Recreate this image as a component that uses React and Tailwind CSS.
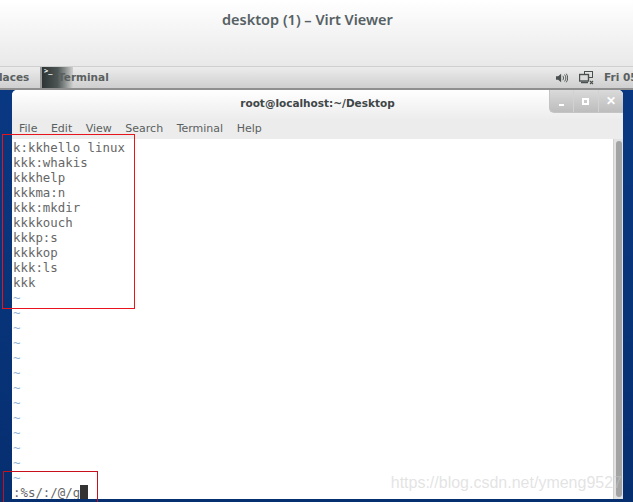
const LINES = ['k:kkhello linux', 'kkk:whakis', 'kkkhelp', 'kkkma:n', 'kkk:mkdir', 'kkkkouch', 'kkkp:s', 'kkkkop', 'kkk:ls', 'kkk'];
const MENU = ['File', 'Edit', 'View', 'Search', 'Terminal', 'Help'];
const TILDES = Array.from({ length: 13 });

function SoundIcon() {
  return (
    <svg width="12" height="12" viewBox="0 0 14 12" className="text-[#4a4f50]">
      <path d="M0 4h2.500L6 1v10L2.500 8H0z" fill="currentColor" />
      <path d="M8 3.500c1 1.500 1 3.500 0 5M10 2c2 2.500 2 5.500 0 8M12 1c2.200 3 2.200 7 0 10" fill="none" stroke="currentColor" strokeWidth="1.100" />
    </svg>
  );
}

function NetworkIcon() {
  return (
    <svg width="15" height="14" viewBox="0 0 15 14" className="text-[#4a4f50]" fill="none" stroke="currentColor">
      <rect x="5.500" y="0.500" width="8" height="6" strokeWidth="1" />
      <rect x="0.500" y="3.500" width="9" height="6.500" fill="#dcdcdc" strokeWidth="1.400" />
      <path d="M2 11.500h7" strokeWidth="1.500" />
      <path d="M11 10l3 3M14 10l-3 3" strokeWidth="1.100" />
    </svg>
  );
}

function WindowButton({ children, last }) {
  return (
    <div className={`w-[24.500px] h-[22px] flex items-center justify-center ${last ? '' : 'border-r border-[#d2d2d2]'}`}>
      {children}
    </div>
  );
}

export default function App() {
  return (
    <div className="relative w-[633px] h-[502px] overflow-hidden bg-gradient-to-b from-[#0a3a86] to-[#062f70] font-['Liberation_Sans',sans-serif]">
      {/* virt viewer titlebar */}
      <div className="h-[67px] bg-gradient-to-b from-white to-[#e9e9e9] border-b border-[#cfcfcf] flex pl-[222px] pt-[10px]">
        <span className="font-['Noto_Sans',sans-serif] font-semibold text-[14.500px] leading-[18px] text-[#566164] whitespace-nowrap">desktop (1) – Virt Viewer</span>
      </div>

      {/* gnome panel */}
      <div className="h-[23px] bg-gradient-to-b from-[#ececec] to-[#cfcfcf] border-b-2 border-[#8f8f8f] flex items-center text-[10.500px] font-['DejaVu_Sans',sans-serif] font-bold text-[#5a5f60]">
        <span className="w-[40px] -ml-[1px] text-right pr-[11px] whitespace-nowrap">laces</span>
        <div className="relative h-full w-[33px] ml-[1px] bg-gradient-to-r from-[#2c3533] via-[#4c5553] to-[#d0d0d0] border-l-2 border-[#999]">
          <span className="absolute left-[2px] top-0 text-[7px] leading-[9px] text-white font-['DejaVu_Sans_Mono',monospace]">&gt;_</span>
        </div>
        <span className="-ml-[15px] relative">Terminal</span>
        <div className="ml-auto flex items-center">
          <SoundIcon />
          <span className="ml-[11px]"><NetworkIcon /></span>
          <span className="ml-[10px] whitespace-nowrap w-[29px]">Fri 05</span>
        </div>
      </div>

      {/* terminal window */}
      <div className="ml-[12px] w-[611px] h-[409px] rounded-t-[5px] overflow-hidden bg-[#ececec] flex flex-col">
        <div className="relative h-[30px] shrink-0 bg-gradient-to-b from-white to-[#ececec] flex justify-center pt-[5px]">
          <span className="font-['DejaVu_Sans',sans-serif] font-bold text-[10.500px] leading-[16px] text-[#3f4647]">root@localhost:~/Desktop</span>
          <div className="absolute right-0 top-0 flex bg-gradient-to-b from-[#dadada] to-[#bdbdbd] rounded-bl-[5px] border-l border-b border-[#c4c4c4]">
            <WindowButton><span className="w-[5px] h-[2px] bg-white mt-[8px]" /></WindowButton>
            <WindowButton><span className="w-[7px] h-[7px] border-2 border-white" /></WindowButton>
            <WindowButton last><span className="text-white font-bold text-[12px] leading-none">✕</span></WindowButton>
          </div>
        </div>
        <div className="h-[19px] shrink-0 flex items-center pl-[7px] gap-[13.500px] font-['DejaVu_Sans',sans-serif] text-[11px] text-[#5a5f60]">
          {MENU.map(m => <span key={m}>{m}</span>)}
        </div>
        <div className="flex-1 flex min-h-0 bg-white">
          <div className="flex-1 pt-[1px] pl-[1px] font-['DejaVu_Sans_Mono',monospace] text-[12.400px] leading-[15px] text-[#666]">
            {LINES.map(l => <div key={l} className="h-[15px] whitespace-pre">{l}</div>)}
            {TILDES.map((_, i) => <div key={i} className="h-[15px] text-[#8fb4dc]">~</div>)}
            <div className="h-[15px] flex text-[#666]">:%s/:/@/g<span className="w-[7.500px] h-[15px] bg-[#333]" /></div>
          </div>
          <div className="w-[10px] shrink-0 bg-[#e2e2e2] border-l border-[#d0d0d0] flex justify-center py-[2px]">
            <div className="w-[6px] h-full rounded-full bg-[#a3a3a3]" />
          </div>
        </div>
      </div>

      {/* annotations on top of the screenshot */}
      <div className="absolute left-[2px] top-[134px] w-[133px] h-[175px] border border-[#e8141c]" />
      <div className="absolute left-[3px] top-[471px] w-[95px] h-[40px] border border-[#c8101c]" />
      <span className="absolute right-[11px] top-[473px] text-[16px] leading-[20px] text-[#c8c8c8]/50 whitespace-nowrap">https://blog.csdn.net/ymeng9527</span>
    </div>
  );
}
